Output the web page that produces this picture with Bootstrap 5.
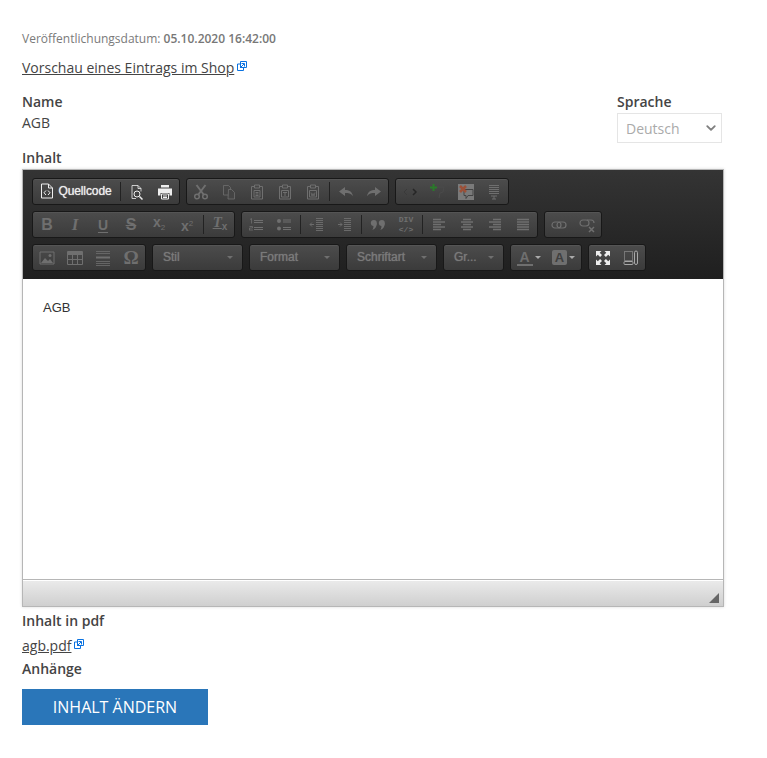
<!DOCTYPE html>
<html lang="de">
<head>
  <meta charset="UTF-8" />
  <meta name="viewport" content="width=device-width, initial-scale=1" />
  <title>Inhalt</title>
  <link href="https://cdn.jsdelivr.net/npm/bootstrap@5.3.3/dist/css/bootstrap.min.css" rel="stylesheet" />
  <style>
    body { font-family: "Open Sans", sans-serif; font-size: 14px; color: #444; background: #fff; }
    .page-wrap { width: 702px; margin-left: 22px; padding-top: 31px; }
    .pub-date { font-size: 12px; line-height: 16px; color: #7a7a7a; margin-bottom: 10px; }
    .pub-date strong { font-weight: 600; color: #777; }
    .shop-link { line-height: 20px; color: #444; }
    .shop-link:hover { color: #2a76b9; }
    .ext-icon { width: 10px; height: 10px; margin-left: 3px; vertical-align: 2px; }
    .field-label { font-weight: 600; line-height: 20px; color: #444; }
    .field-value { line-height: 20px; margin-top: 1px; }
    .name-row { margin-top: 10px; }
    .lang-col { width: 105px; margin-right: 2px; }
    .lang-select, .lang-select:disabled { height: 30px; margin-top: 1px; padding: 0 20px 0 8px; font-size: 14px; color: #aaa; background-color: #fff; border: 1px solid #e5e5e5; border-radius: 0; background-position: right 4px center; background-size: 12px 10px; --bs-form-select-bg-img: url("data:image/svg+xml,%3csvg xmlns='http://www.w3.org/2000/svg' viewBox='0 0 16 16'%3e%3cpath fill='none' stroke='%23808080' stroke-linecap='round' stroke-linejoin='round' stroke-width='3' d='m2 5 6 6 6-6'/%3e%3c/svg%3e"); }
    .inhalt-label { margin-top: 5px; }
    .ed-box { height: 438px; margin-top: 1px; border: 1px solid #b6b6b6; box-shadow: 0 0 3px rgba(0,0,0,.15); }
    .ed-top { height: 109px; padding: 8px 9px 0; background: linear-gradient(#343434, #1f1f1f); font-family: "Liberation Sans", sans-serif; }
    .ed-row { height: 27px; margin-bottom: 6px; gap: 6px; }
    .ed-group { border: 1px solid #181818; border-radius: 3px; background: linear-gradient(#4c4c4c, #3b3b3b); box-shadow: inset 0 1px 0 rgba(255,255,255,.05); align-items: center; }
    .ed-btn { width: 28px; height: 100%; color: #6f6f6f; justify-content: center; align-items: center; }
    .ed-btn svg { width: 16px; height: 16px; }
    .ed-btn.on { color: #eee; }
    .src-btn { width: 85px; gap: 3px; padding: 0 0 1px 0; font-size: 12px; color: #f2f2f2; text-shadow: 0 0 1px #ddd; letter-spacing: -.1px; }
    .ed-sep { width: 1px; height: 19px; margin: 0 2px; background: #222; flex: none; }
    .ed-combo { font-size: 12px; color: #7a7a7a; text-shadow: 0 0 1px #7a7a7a; padding: 0 9px 1px 10px; justify-content: space-between; }
    .combo-wide { width: 91px; }
    .combo-size { width: 61px; }
    .ed-caret { width: 0; height: 0; border: 3px solid transparent; border-top-color: #6f6f6f; border-bottom: 0; }
    .color-btn { width: 35px; gap: 2px; }
    .color-btn .ed-caret { border-top-color: #aaa; }
    .dim-on { color: #a8a8a8; }
    /* letter buttons are real text */
    .ed-letter { font-weight: 700; line-height: 16px; font-size: 16px; }
    .ed-letter.serif { font-family: "Liberation Serif", serif; font-style: italic; font-size: 17px; }
    .ed-letter.under { font-size: 14px; text-decoration: underline; text-underline-offset: 2px; }
    .ed-letter.strike { text-decoration: line-through; }
    .ed-letter.omega { font-family: "Liberation Serif", serif; font-weight: 700; font-size: 19px; }
    .ed-mini { font-size: 14px; font-weight: 700; line-height: 16px; }
    .ed-mini small { font-size: 8px; font-weight: 400; }
    .ed-mini .low { vertical-align: -3px; }
    .ed-mini .high { vertical-align: 5px; }
    .ed-rmf { font-family: "Liberation Serif", serif; font-style: italic; font-size: 15px; font-weight: 700; line-height: 16px; text-decoration: underline; }
    .ed-rmf small { font-family: "Liberation Sans", sans-serif; font-style: normal; font-size: 10px; vertical-align: -3px; display: inline-block; text-decoration: none; }
    .ed-div { font-family: "Liberation Mono", monospace; font-weight: 700; font-size: 8px; line-height: 9.5px; text-align: center; }
    .ed-a { font-size: 14px; font-weight: 700; line-height: 14px; width: 16px; text-align: center; border-bottom: 2px solid currentColor; }
    .ed-a-bg { font-size: 13px; font-weight: 700; line-height: 15px; width: 15px; text-align: center; color: #3f3f3f; background: #6f6f6f; border-radius: 2px; }
    .ed-body { height: 300px; padding: 20px; font-size: 13px; line-height: 18px; color: #333; font-family: "Liberation Sans", sans-serif; background: #fff; }
    .ed-foot { height: 27px; border-top: 1px solid #b6b6b6; box-shadow: inset 0 1px 0 #fff; background: linear-gradient(#ebebeb, #cfcfcf); }
    .ed-grip { width: 0; height: 0; border-style: solid; border-width: 0 0 10px 10px; border-color: transparent transparent #666 transparent; margin: 13px 4px 0 0; }
    .attach-label { margin-top: 4px; }
    .pdf-line { margin: 4px 0 3px; }
    .save-btn { width: 186px; height: 36px; padding: 0; margin-top: 10px; font-size: 16px; line-height: 36px; color: #fff; background: #2a76b9; border: 0; border-radius: 0; text-transform: uppercase; }
    .save-btn:hover { background: #256aa7; color: #fff; }
  </style>
</head>
<body>

<svg width="0" height="0" class="d-block position-absolute">
  <symbol id="i-ext" viewBox="0 0 10 10"><path d="M.5 3h6v6.500h-6z" fill="#fff" stroke="#0a72e0"/><path d="M3.500 .5h6v6h-6z" fill="#fff" stroke="#0a72e0"/><path d="M3 7l4-4M4.500 2.500h3v3" fill="none" stroke="#0a72e0"/></symbol>
  <symbol id="i-src" viewBox="0 0 16 16"><path d="M2.500 1h7l4 4v10h-11z" fill="none" stroke="currentColor"/><path d="M9.500 1v4h4" fill="none" stroke="currentColor"/><path d="M7 7.500l-2 2.250 2 2.250M9 7.500l2 2.250-2 2.250" fill="none" stroke="currentColor"/></symbol>
  <symbol id="i-preview" viewBox="0 0 16 16"><path d="M7 14.500h-4v-13h6l3 3v3" fill="none" stroke="currentColor" stroke-width=".8"/><path d="M9 1.500v3h3" fill="none" stroke="currentColor" stroke-width=".8"/><circle cx="8" cy="10" r="3" fill="none" stroke="currentColor"/><path d="M10.500 12.500l3 3" stroke="currentColor" stroke-width="1.500"/></symbol>
  <symbol id="i-print" viewBox="0 0 16 16"><path d="M4 1h8v2.500h-8zM1 4.500h14v7h-2.500v-2.500h-9v2.500h-2.500z" fill="currentColor"/><path d="M4.500 10h7v5h-7z" fill="none" stroke="currentColor"/><path d="M6 12h4M6 13.500h4" stroke="currentColor"/></symbol>
  <symbol id="i-cut" viewBox="0 0 16 16"><path d="M3.500 1l7.500 10M12.500 1l-7.500 10" stroke="currentColor" stroke-width="2"/><circle cx="4" cy="12.500" r="2.300" fill="none" stroke="currentColor" stroke-width="1.500"/><circle cx="12" cy="12.500" r="2.300" fill="none" stroke="currentColor" stroke-width="1.500"/></symbol>
  <symbol id="i-copy" viewBox="0 0 16 16"><path d="M2.500 1.500h5l2 2v7.500h-7z" fill="none" stroke="currentColor" stroke-width=".8"/><path d="M7.500 5.500h3l3 3v6.500h-6.500z" fill="#444" stroke="currentColor" stroke-width=".8"/></symbol>
  <symbol id="i-paste" viewBox="0 0 16 16"><path d="M5 2.500h-2.500v12.500h11v-12.500h-2.500" fill="none" stroke="currentColor"/><path d="M5.500 1h5v3h-5z" fill="none" stroke="currentColor"/><path d="M5 6.500h6v6.500h-6z" fill="none" stroke="currentColor"/><path d="M6.500 8.500h3M6.500 10h3M6.500 11.500h3" stroke="currentColor"/></symbol>
  <symbol id="i-paste-t" viewBox="0 0 16 16"><path d="M5 2.500h-2.500v12.500h11v-12.500h-2.500" fill="none" stroke="currentColor"/><path d="M5.500 1h5v3h-5z" fill="none" stroke="currentColor"/><path d="M4.500 6.500h7v6.500h-7z" fill="none" stroke="currentColor"/><path d="M6 8.500h4M8 8.500v3.500" stroke="currentColor"/></symbol>
  <symbol id="i-paste-w" viewBox="0 0 16 16"><path d="M5 2.500h-2.500v12.500h11v-12.500h-2.500" fill="none" stroke="currentColor"/><path d="M5.500 1h5v3h-5z" fill="none" stroke="currentColor"/><path d="M4.500 6.500h7v6.500h-7z" fill="none" stroke="currentColor"/><path d="M6 8.500l1 3.500 1-2.500 1 2.500 1-3.500" fill="none" stroke="currentColor" stroke-width=".8"/></symbol>
  <symbol id="i-undo" viewBox="0 0 16 16"><path d="M7 3v3c4 0 7 1.500 8 6-2-2.500-4.500-3-8-3v3l-6-4.500z" fill="currentColor"/></symbol>
  <symbol id="i-redo" viewBox="0 0 16 16"><path d="M9 3v3c-4 0-7 1.500-8 6 2-2.500 4.500-3 8-3v3l6-4.500z" fill="currentColor"/></symbol>
  <symbol id="i-tag" viewBox="0 0 16 16"><path d="M5 5l-3 3 3 3" fill="none" stroke="#3a3a3a"/><path d="M11 5l3 3-3 3" fill="none" stroke="#262626" stroke-width="1.500"/></symbol>
  <symbol id="i-plus" viewBox="0 0 16 16"><path d="M2.500 0h2v2.500h2.500v2h-2.500v2.500h-2v-2.500h-2.500v-2h2.500z" fill="#2a7a2a"/><path d="M7 3h7M14 3l-1 5-3 1-1 5" fill="none" stroke="#4a4a4a"/></symbol>
  <symbol id="i-spell" viewBox="0 0 16 16"><path d="M0 0h16v16h-16z" fill="#7a7a7a"/><path d="M6 5.500h9v6h-5l-2 3v-3h-2z" fill="none" stroke="#444"/><path d="M2 2l6 6M8 2l-6 6" stroke="#9c5038" stroke-width="2.500"/></symbol>
  <symbol id="i-lines" viewBox="0 0 16 16"><path d="M3 1.500h10M3 3.500h10M3 5.500h10M3 7.500h10M3 9.500h10M5 12h6M8 12v3M6 15h4" stroke="currentColor"/></symbol>
  <symbol id="i-ol" viewBox="0 0 16 16"><path d="M6 3.500h9M6 5.500h9M6 10.500h9M6 12.500h9" stroke="currentColor"/><path d="M2 2.500l1.500-1v5M1 13h4M1.500 9.500h3v1.500h-3v2" fill="none" stroke="currentColor" stroke-width=".8"/></symbol>
  <symbol id="i-ul" viewBox="0 0 16 16"><circle cx="3" cy="4" r="2" fill="currentColor"/><circle cx="3" cy="11.500" r="2" fill="currentColor"/><path d="M7 3h8M7 5h8M7 10.500h8M7 12.500h8" stroke="currentColor"/></symbol>
  <symbol id="i-out" viewBox="0 0 16 16"><path d="M7 1.500h7M7 3.500h7M7 5.500h7M7 7.500h7M7 9.500h7M7 11.500h7M7 13.500h7M1 7.500h4M1 7.500l2-2M1 7.500l2 2" fill="none" stroke="currentColor" stroke-width=".9"/></symbol>
  <symbol id="i-ind" viewBox="0 0 16 16"><path d="M7 1.500h7M7 3.500h7M7 5.500h7M7 7.500h7M7 9.500h7M7 11.500h7M7 13.500h7M1 7.500h4M5 7.500l-2-2M5 7.500l-2 2" fill="none" stroke="currentColor" stroke-width=".9"/></symbol>
  <symbol id="i-quote" viewBox="0 0 16 16"><circle cx="3.800" cy="6" r="3" fill="currentColor"/><circle cx="11.800" cy="6" r="3" fill="currentColor"/><path d="M6.800 6c0 3.500-1.500 6-4.500 7 1.200-1.500 1.200-3.500 1.200-6zM14.800 6c0 3.500-1.500 6-4.500 7 1.200-1.500 1.200-3.500 1.200-6z" fill="currentColor"/></symbol>
  <symbol id="i-left" viewBox="0 0 16 16"><path d="M2 2.500h8M2 5h12M2 7.500h8M2 10h12M2 12.500h8" stroke="currentColor" stroke-width="1.300"/></symbol>
  <symbol id="i-center" viewBox="0 0 16 16"><path d="M4 2.500h8M2 5h12M4 7.500h8M2 10h12M4 12.500h8" stroke="currentColor" stroke-width="1.300"/></symbol>
  <symbol id="i-right" viewBox="0 0 16 16"><path d="M6 2.500h8M2 5h12M6 7.500h8M2 10h12M6 12.500h8" stroke="currentColor" stroke-width="1.300"/></symbol>
  <symbol id="i-just" viewBox="0 0 16 16"><path d="M2 2.500h12M2 5h12M2 7.500h12M2 10h12M2 12.500h12" stroke="currentColor" stroke-width="1.300"/></symbol>
  <symbol id="i-link" viewBox="0 0 16 16"><rect x="1" y="5" width="9" height="6" rx="3" fill="none" stroke="currentColor" stroke-width="1.200"/><rect x="6" y="5" width="9" height="6" rx="3" fill="none" stroke="currentColor" stroke-width="1.200"/></symbol>
  <symbol id="i-unlink" viewBox="0 0 16 16"><rect x="1" y="3" width="9" height="6" rx="3" fill="none" stroke="currentColor" stroke-width="1.200"/><path d="M8 3h4a3 3 0 0 1 3 3" fill="none" stroke="currentColor" stroke-width="1.200"/><path d="M10 10l5 5M15 10l-5 5" stroke="currentColor" stroke-width="1.500"/></symbol>
  <symbol id="i-img" viewBox="0 0 16 16"><path d="M1 2h14v12h-14z" fill="none" stroke="currentColor"/><path d="M2 13l4-5 3 3 2-2 3 4z" fill="currentColor"/><circle cx="11" cy="5.500" r="1.500" fill="currentColor"/></symbol>
  <symbol id="i-table" viewBox="0 0 16 16"><path d="M.5 1.500h15v13h-15z" fill="none" stroke="currentColor"/><path d="M.5 2h15v3h-15z" fill="currentColor"/><path d="M.5 9.500h15M5.500 5v9M10.500 5v9" stroke="currentColor"/></symbol>
  <symbol id="i-hr" viewBox="0 0 16 16"><path d="M1 1.500h14M1 3.500h14M1 11.500h14M1 13.500h14M1 15.500h14" stroke="currentColor" stroke-width=".8"/><path d="M1 7.500h14" stroke="currentColor" stroke-width="2"/></symbol>
  <symbol id="i-max" viewBox="0 0 16 16"><path d="M1 1h5.500l-1.800 1.800 2.300 2.300-1.900 1.900-2.300-2.300-1.800 1.800zM15 1v5.500l-1.800-1.800-2.300 2.300-1.900-1.900 2.300-2.300-1.800-1.800zM1 15v-5.500l1.800 1.800 2.300-2.300 1.900 1.900-2.300 2.300 1.800 1.800zM15 15h-5.500l1.800-1.800-2.300-2.300 1.900-1.900 2.300 2.300 1.800-1.800z" fill="currentColor"/></symbol>
  <symbol id="i-blocks" viewBox="0 0 16 16"><path d="M1.500 1.500h8v9h-8z" fill="none" stroke="currentColor" stroke-dasharray="1 1"/><rect x="1" y="11.500" width="9" height="3" rx="1" fill="none" stroke="currentColor"/><rect x="11.500" y="1" width="3" height="13.500" rx="1.500" fill="none" stroke="currentColor"/></symbol>
</svg>

<div class="page-wrap">
  <div class="pub-date">Veröffentlichungsdatum: <strong>05.10.2020 16:42:00</strong></div>
  <div><a class="shop-link" href="#">Vorschau eines Eintrags im Shop</a><svg class="ext-icon"><use href="#i-ext"/></svg></div>

  <div class="d-flex justify-content-between name-row">
    <div class="pt-1">
      <div class="field-label">Name</div>
      <div class="field-value">AGB</div>
    </div>
    <div class="lang-col pt-1">
      <div class="field-label">Sprache</div>
      <select class="form-select lang-select" disabled><option>Deutsch</option></select>
    </div>
  </div>

  <div class="field-label inhalt-label">Inhalt</div>
  <div class="ed-box">
    <div class="ed-top">
      <div class="d-flex ed-row">
        <div class="d-flex ed-group">
          <div class="d-flex ed-btn src-btn on"><svg><use href="#i-src"/></svg>Quellcode</div>
          <div class="ed-sep"></div>
          <div class="d-flex ed-btn on"><svg><use href="#i-preview"/></svg></div>
          <div class="d-flex ed-btn on"><svg><use href="#i-print"/></svg></div>
        </div>
        <div class="d-flex ed-group">
          <div class="d-flex ed-btn"><svg><use href="#i-cut"/></svg></div>
          <div class="d-flex ed-btn"><svg><use href="#i-copy"/></svg></div>
          <div class="d-flex ed-btn"><svg><use href="#i-paste"/></svg></div>
          <div class="d-flex ed-btn"><svg><use href="#i-paste-t"/></svg></div>
          <div class="d-flex ed-btn"><svg><use href="#i-paste-w"/></svg></div>
          <div class="ed-sep"></div>
          <div class="d-flex ed-btn"><svg><use href="#i-undo"/></svg></div>
          <div class="d-flex ed-btn"><svg><use href="#i-redo"/></svg></div>
        </div>
        <div class="d-flex ed-group">
          <div class="d-flex ed-btn"><svg><use href="#i-tag"/></svg></div>
          <div class="d-flex ed-btn"><svg><use href="#i-plus"/></svg></div>
          <div class="d-flex ed-btn"><svg><use href="#i-spell"/></svg></div>
          <div class="d-flex ed-btn"><svg><use href="#i-lines"/></svg></div>
        </div>
      </div>
      <div class="d-flex ed-row">
        <div class="d-flex ed-group">
          <div class="d-flex ed-btn"><span class="ed-letter">B</span></div>
          <div class="d-flex ed-btn"><span class="ed-letter serif">I</span></div>
          <div class="d-flex ed-btn"><span class="ed-letter under">U</span></div>
          <div class="d-flex ed-btn"><span class="ed-letter strike">S</span></div>
          <div class="d-flex ed-btn"><span class="ed-mini">x<small class="low">2</small></span></div>
          <div class="d-flex ed-btn"><span class="ed-mini">x<small class="high">2</small></span></div>
          <div class="ed-sep"></div>
          <div class="d-flex ed-btn"><span class="ed-rmf">T<small>x</small></span></div>
        </div>
        <div class="d-flex ed-group">
          <div class="d-flex ed-btn"><svg><use href="#i-ol"/></svg></div>
          <div class="d-flex ed-btn"><svg><use href="#i-ul"/></svg></div>
          <div class="ed-sep"></div>
          <div class="d-flex ed-btn"><svg><use href="#i-out"/></svg></div>
          <div class="d-flex ed-btn"><svg><use href="#i-ind"/></svg></div>
          <div class="ed-sep"></div>
          <div class="d-flex ed-btn"><svg><use href="#i-quote"/></svg></div>
          <div class="d-flex ed-btn"><span class="ed-div">DIV<br>&lt;/&gt;</span></div>
          <div class="ed-sep"></div>
          <div class="d-flex ed-btn"><svg><use href="#i-left"/></svg></div>
          <div class="d-flex ed-btn"><svg><use href="#i-center"/></svg></div>
          <div class="d-flex ed-btn"><svg><use href="#i-right"/></svg></div>
          <div class="d-flex ed-btn"><svg><use href="#i-just"/></svg></div>
        </div>
        <div class="d-flex ed-group">
          <div class="d-flex ed-btn"><svg><use href="#i-link"/></svg></div>
          <div class="d-flex ed-btn"><svg><use href="#i-unlink"/></svg></div>
        </div>
      </div>
      <div class="d-flex ed-row">
        <div class="d-flex ed-group">
          <div class="d-flex ed-btn"><svg><use href="#i-img"/></svg></div>
          <div class="d-flex ed-btn"><svg><use href="#i-table"/></svg></div>
          <div class="d-flex ed-btn"><svg><use href="#i-hr"/></svg></div>
          <div class="d-flex ed-btn"><span class="ed-letter omega">Ω</span></div>
        </div>
        <div class="d-flex ed-group ed-combo combo-wide">Stil<span class="ed-caret"></span></div>
        <div class="d-flex ed-group ed-combo combo-wide">Format<span class="ed-caret"></span></div>
        <div class="d-flex ed-group ed-combo combo-wide">Schriftart<span class="ed-caret"></span></div>
        <div class="d-flex ed-group ed-combo combo-size">Gr...<span class="ed-caret"></span></div>
        <div class="d-flex ed-group">
          <div class="d-flex ed-btn color-btn"><span class="ed-a">A</span><span class="ed-caret"></span></div>
          <div class="d-flex ed-btn color-btn"><span class="ed-a-bg">A</span><span class="ed-caret"></span></div>
        </div>
        <div class="d-flex ed-group">
          <div class="d-flex ed-btn on"><svg><use href="#i-max"/></svg></div>
          <div class="d-flex ed-btn dim-on"><svg><use href="#i-blocks"/></svg></div>
        </div>
      </div>
    </div>
    <div class="ed-body">AGB</div>
    <div class="ed-foot d-flex justify-content-end"><div class="ed-grip"></div></div>
  </div>

  <div class="field-label attach-label">Inhalt in pdf</div>
  <div class="pdf-line"><a class="shop-link" href="#">agb.pdf</a><svg class="ext-icon"><use href="#i-ext"/></svg></div>
  <div class="field-label">Anhänge</div>
  <button type="button" class="btn save-btn">Inhalt ändern</button>
</div>

<script src="https://cdn.jsdelivr.net/npm/bootstrap@5.3.3/dist/js/bootstrap.bundle.min.js"></script>
</body>
</html>
